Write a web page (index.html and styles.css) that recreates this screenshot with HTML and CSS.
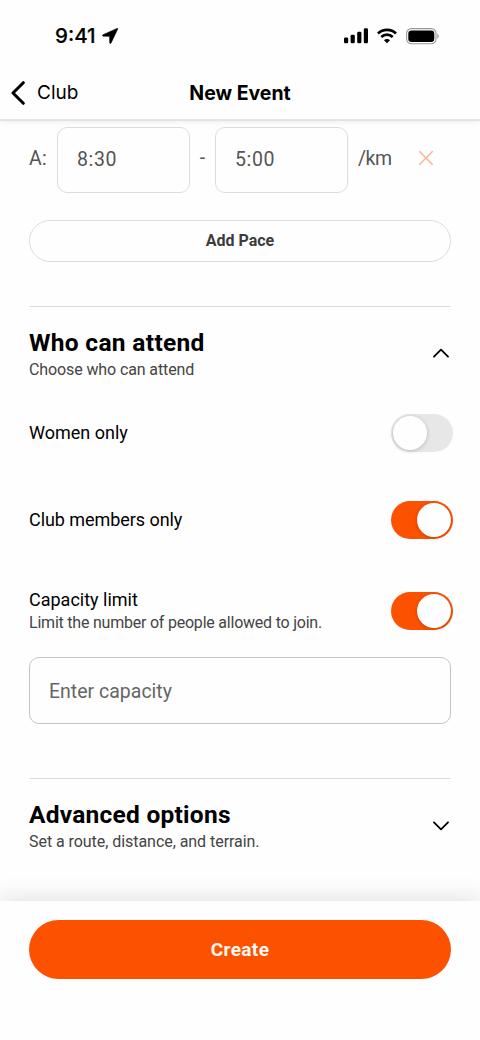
FILE: index.html
```html
<!DOCTYPE html>
<html lang="en">
<head>
<meta charset="utf-8">
<title>New Event</title>
<link rel="stylesheet" href="styles.css">
</head>
<body>
<div class="screen">
  <header class="header">
    <div class="status">
      <div class="status-left">
        <span class="time">9:41</span>
        <svg class="location" width="16" height="16" viewBox="0 0 16 16"><path d="M15 .4 1 6.8c-.8.4-.6 1.3.2 1.4l6.4.1.1 6.4c0 .9 1 1.1 1.4.2L15.7 1c.2-.5-.2-.8-.7-.6Z" stroke="#000" stroke-width=".6"/></svg>
      </div>
      <div class="status-right">
        <svg width="24" height="16" viewBox="0 0 24 16"><rect x="0" y="9.5" width="4.2" height="5.8" rx="1.4"/><rect x="6.6" y="6.8" width="4.2" height="8.5" rx="1.4"/><rect x="13.2" y="3.7" width="4.2" height="11.6" rx="1.4"/><rect x="19.8" y=".3" width="4.2" height="15" rx="1.4"/></svg>
        <svg width="20" height="16" viewBox="0 0 20 16"><g fill="none" stroke="#000" stroke-width="2.7"><path d="M1 5.5a12.8 12.8 0 0 1 18 0"/><path d="M4.3 9a8.2 8.2 0 0 1 11.4 0"/></g><path d="m10 15.3-3-3.1a4.2 4.2 0 0 1 6 0Z"/></svg>
        <svg width="33" height="17" viewBox="0 0 33 17"><rect x=".6" y=".6" width="29.4" height="15.2" rx="4.8" fill="none" stroke="#999" stroke-width="1.1"/><rect x="2.3" y="2.4" width="26" height="11.6" rx="3.3"/><path d="M31.4 5.8c1.8.6 1.8 4.2 0 4.8Z" fill="#999"/></svg>
      </div>
    </div>
    <nav class="nav">
      <a class="back"><svg width="14" height="24" viewBox="0 0 14 24"><path d="M12.3 1.7 2 12l10.3 10.3" fill="none" stroke="#000" stroke-width="3" stroke-linecap="round" stroke-linejoin="round"/></svg><span class="back-label">Club</span></a>
      <h1 class="title">New Event</h1>
      <span></span>
    </nav>
  </header>
  <main class="content">
    <div class="pace">
      <span class="pace-name">A:</span>
      <div class="pace-input">8:30</div>
      <span class="dash">-</span>
      <div class="pace-input">5:00</div>
      <span class="unit">/km</span>
      <svg class="remove" width="16" height="16" viewBox="0 0 16 16"><path d="m1.3 1.3 13.4 13.4m0-13.4L1.3 14.7" fill="none" stroke="#f3b68f" stroke-width="1.4"/></svg>
    </div>
    <div class="add">Add Pace</div>
    <section class="section who">
      <div>
        <h2 class="heading attend">Who can attend</h2>
        <p class="sub choose">Choose who can attend</p>
      </div>
      <svg class="chevron" width="16" height="10" viewBox="0 0 16 10"><path d="m1 8.7 7-7 7 7"/></svg>
    </section>
    <div class="option women"><span class="label">Women only</span><span class="toggle"><span class="knob"></span></span></div>
    <div class="option members"><span class="label">Club members only</span><span class="toggle on"><span class="knob"></span></span></div>
    <div class="option limit"><div><div class="label">Capacity limit</div><p class="sub help">Limit the number of people allowed to join.</p></div><span class="toggle on"><span class="knob"></span></span></div>
    <div class="capacity">Enter capacity</div>
    <section class="section advanced">
      <div>
        <h2 class="heading options">Advanced options</h2>
        <p class="sub route">Set a route, distance, and terrain.</p>
      </div>
      <svg class="chevron" width="16" height="10" viewBox="0 0 16 10"><path d="m1 1.3 7 7 7-7"/></svg>
    </section>
  </main>
  <footer class="footer"><div class="create">Create</div></footer>
</div>
</body>
</html>
```
FILE: styles.css
```css
* { box-sizing: border-box; }
body { margin: 0; background: #fefefe; font-family: Roboto, "Liberation Sans", sans-serif; color: #000; }
h1, h2, p { margin: 0; }
svg { display: block; flex: none; }
.screen { display: flex; flex-direction: column; width: 480px; height: 1040px; overflow: hidden; }
.header { height: 119px; flex: none; background: #fefefe; box-shadow: 0 2px 1px #e4e4e4, 0 4px 5px #f3f3f3; font-family: Inter, sans-serif; }
.status { display: flex; justify-content: space-between; height: 72px; padding: 0 41px 0 55px; align-items: center; }
.status-left, .status-right { display: flex; align-items: center; }
.status-left { gap: 5px; }
.status-right { gap: 9px; }
.time { font-size: 20.5px; font-weight: 500; -webkit-text-stroke: .2px #000; line-height: 24px; width: 42px; }
.nav { display: grid; grid-template-columns: 1fr auto 1fr; align-items: center; height: 41px; padding: 0 11px; }
.back { display: flex; align-items: center; gap: 12px; }
.back-label { font-size: 19px; line-height: 24px; }
.title { font-size: 19.5px; line-height: 24px; font-weight: 700; letter-spacing: -.02px; }
.content { flex: none; height: 782px; padding: 8px 29px 0; }
.pace { display: flex; align-items: center; height: 65px; color: #555; font-size: 19.5px; line-height: 24px; }
.pace-name { width: 28px; padding-bottom: 2px; letter-spacing: .3px; }
.pace-input { width: 133px; height: 66px; padding: 20px 19px; border: 1px solid #ddd; border-radius: 10px; letter-spacing: .6px; }
.dash { width: 25px; text-align: center; padding-bottom: 3px; }
.unit { width: 61px; padding: 0 0 2px 10px; letter-spacing: -.5px; }
.remove { margin: 0 0 3px 9px; }
.add { height: 42px; margin-top: 28px; border: 1px solid #ddd; border-radius: 21px; text-align: center; font-size: 16px; line-height: 40px; font-weight: 700; color: #3c3c3c; }
.section { display: flex; justify-content: space-between; border-top: 1px solid #ddd; padding: 21px 2px 0 0; }
.heading { font-size: 24.5px; line-height: 29px; padding-bottom: 2px; font-weight: 700; white-space: nowrap; letter-spacing: .32px; }
.options { letter-spacing: .25px; }
.sub { font-size: 16px; line-height: 22px; color: #444; white-space: nowrap; }
.choose { letter-spacing: -.11px; }
.help { letter-spacing: -.22px; }
.route { letter-spacing: -.05px; }
.who { height: 99px; margin-top: 44px; }
.chevron { margin-top: 20px; fill: none; stroke: #000; stroke-width: 1.8; stroke-linecap: round; stroke-linejoin: round; }
.option { display: flex; justify-content: space-between; align-items: center; margin-right: -2px; }
.label { font-size: 18px; line-height: 24px; white-space: nowrap; }
.members .label { letter-spacing: -.06px; }
.women { height: 56px; }
.members { height: 117px; }
.limit { height: 65px; }
.limit .label { padding-top: 1px; }
.toggle { display: flex; width: 62px; height: 38px; padding: 2px; border-radius: 19px; background: #e7e7e7; }
.knob { width: 34px; height: 34px; border-radius: 50%; background: #fefefe; box-shadow: 0 1px 4px #0003; }
.on { justify-content: flex-end; background: #fc5200; }
.capacity { height: 67px; margin-top: 14px; border: 1.5px solid #c4c4c4; border-radius: 10px; padding: 21px 19px; font-size: 19.5px; line-height: 25px; color: #666; }
.advanced { margin-top: 54px; }
.advanced .chevron { margin-top: 21px; }
.footer { position: relative; flex: 1; padding: 19px 29px; background: #fefefe; box-shadow: 0 0 24px 2px #0000001f; }
.create { height: 59px; border-radius: 29.5px; background: #fc5200; color: #fff8ef; text-align: center; font-size: 19px; line-height: 60px; font-weight: 700; letter-spacing: .4px; }
```
